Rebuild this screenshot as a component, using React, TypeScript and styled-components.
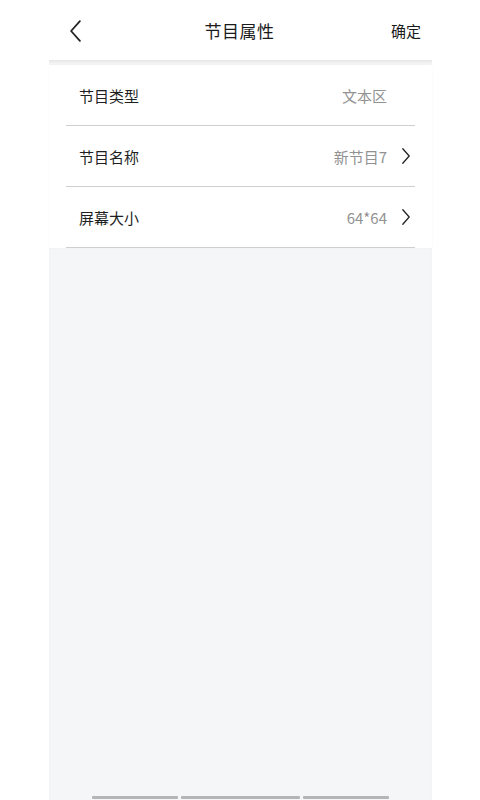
import React, { FC, ReactElement } from 'react';
import styled, { createGlobalStyle } from 'styled-components';

const GlobalStyle = createGlobalStyle`
  html, body {
    margin: 0;
    padding: 0;
    height: 100%;
    background: #fff;
  }
  body {
    font-family: "Noto Sans CJK SC", "Noto Sans", sans-serif;
  }
  #root {
    height: 100%;
  }
`;

const Chevron: FC<{ dir: 'left' | 'right'; size: number; stroke: number }> = ({
  dir,
  size,
  stroke,
}) => (
  <svg width={size} height={size * 2} viewBox="0 0 10 20" fill="none">
    <path
      d={dir === 'left' ? 'M9 1 L1 10 L9 19' : 'M1 1 L9 10 L1 19'}
      stroke="#222"
      strokeWidth={stroke}
      strokeLinecap="round"
      strokeLinejoin="round"
    />
  </svg>
);

const rows = [
  { label: '节目类型', value: '文本区', arrow: false },
  { label: '节目名称', value: '新节目7', arrow: true },
  { label: '屏幕大小', value: '64*64', arrow: true },
];

export default function App(): ReactElement {
  return (
    <Page>
      <GlobalStyle />
      <Header>
        <BackButton>
          <Chevron dir="left" size={11} stroke={1.6} />
        </BackButton>
        <Title>节目属性</Title>
        <Confirm>确定</Confirm>
      </Header>
      <Column>
        <List>
          {rows.map((row) => (
            <Row key={row.label}>
              <Label>{row.label}</Label>
              <Value>{row.value}</Value>
              <ArrowSlot>
                {row.arrow && <Chevron dir="right" size={8} stroke={1.6} />}
              </ArrowSlot>
            </Row>
          ))}
        </List>
        <Filler />
        <BarRow>
          <Bar $w={86} />
          <Bar $w={119} />
          <Bar $w={86} />
        </BarRow>
      </Column>
    </Page>
  );
}

const Page = styled.div`
  min-height: 100%;
  height: 800px;
  display: flex;
  flex-direction: column;
  background: #fff;
`;

const Header = styled.div`
  height: 60px;
  flex-shrink: 0;
  display: grid;
  grid-template-columns: 1fr auto 1fr;
  align-items: center;
  padding: 0 59px 0 70px;
  background: #fff;
`;

const BackButton = styled.div`
  display: flex;
  align-items: center;
  height: 22px;
  margin-top: 1px;
`;

const Title = styled.div`
  font-size: 17px;
  color: #1a1a1a;
  letter-spacing: 0.5px;
  margin-right: 12px;
`;

const Confirm = styled.div`
  justify-self: end;
  font-size: 15px;
  color: #1a1a1a;
`;

const Column = styled.div`
  width: 383px;
  margin: 0 auto 0 49px;
  flex: 1;
  display: flex;
  flex-direction: column;
  background: #f5f6f8;
  box-shadow: inset 0 3px 3px -1px #e6e6e6;
`;

const List = styled.div`
  background: #fff;
  margin-top: 5px;
  box-shadow: 0 0 4px rgba(0, 0, 0, 0.03);
`;

const Row = styled.div`
  height: 60px;
  margin: 0 17px;
  padding: 0 5px 0 13px;
  display: flex;
  align-items: center;
  border-bottom: 1px solid #cfcfcf;
`;

const Label = styled.div`
  flex: 1;
  font-size: 15px;
  color: #1f1f1f;
`;

const Value = styled.div`
  font-size: 15px;
  color: #929292;
`;

const ArrowSlot = styled.div`
  width: 23px;
  display: flex;
  justify-content: flex-end;
  align-items: center;
`;

const Filler = styled.div`
  flex: 1;
`;

const BarRow = styled.div`
  display: flex;
  gap: 3px;
  padding-left: 43px;
  height: 4px;
`;

const Bar = styled.div<{ $w: number }>`
  width: ${(p) => p.$w}px;
  height: 3px;
  background: #b5b5b5;
  border-radius: 1px;
`;
